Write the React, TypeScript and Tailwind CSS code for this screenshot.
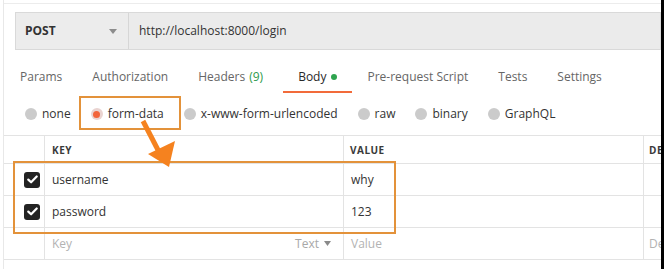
import React from "react";

const Radio = ({ active }: { active?: boolean }) =>
  active ? (
    <span className="w-[12px] h-[12px] rounded-full bg-[#e9d3d0] flex items-center justify-center">
      <span className="w-[7px] h-[7px] rounded-full bg-[#f2643a]" />
    </span>
  ) : (
    <span className="w-[12px] h-[12px] rounded-full bg-[#cbcbcb]" />
  );

const Check = () => (
  <span className="w-[16px] h-[16px] rounded-[3px] bg-[#232323] flex items-center justify-center">
    <svg width="11" height="9" viewBox="0 0 11 9">
      <path d="M1.3 4.6 L4.1 7.3 L9.7 1.5" stroke="white" strokeWidth="2.2" fill="none" strokeLinecap="round" strokeLinejoin="round" />
    </svg>
  </span>
);

export default function App() {
  const tabs = [
    { l: "Params" },
    { l: "Authorization" },
    { l: "Headers", badge: "(9)" },
    { l: "Body", active: true },
    { l: "Pre-request Script" },
    { l: "Tests" },
    { l: "Settings" },
  ];
  const radios = [
    { l: "none" },
    { l: "form-data", active: true },
    { l: "x-www-form-urlencoded" },
    { l: "raw" },
    { l: "binary" },
    { l: "GraphQL" },
  ];
  const rows = [
    { k: "username", v: "why" },
    { k: "password", v: "123" },
  ];
  return (
    <div className="relative w-[664px] h-[269px] bg-white overflow-hidden flex font-['Open_Sans',sans-serif] text-[12px] text-[#333]">
      <div className="w-[3px] shrink-0" />
      <div className="flex-1 border-l border-[#e8e8e8] flex flex-col min-w-0">
        <div className="h-[4px] border-b border-[#ececec] shrink-0" />
        {/* URL bar */}
        <div className="mt-[8px] ml-[11px] h-[38px] flex border border-[#d9d9d9] bg-[#ebebeb] shrink-0">
          <div className="w-[113px] flex items-center justify-between pl-[9px] pr-[11px] border-r border-[#d6d6d6] bg-[#ececec]">
            <span className="font-bold text-[12px] text-[#333]">POST</span>
            <svg width="8" height="5" viewBox="0 0 8 5"><path d="M0 0 L8 0 L4 5 Z" fill="#8c8c8c" /></svg>
          </div>
          <div className="flex items-center pl-[10px] text-[#333]">http://localhost:8000/login</div>
        </div>
        {/* tabs */}
        <div className="mt-[13px] ml-[1px] h-[30px] flex shrink-0">
          {tabs.map((t) => (
            <div
              key={t.l}
              className={
                "px-[15px] flex items-center border-b-[2px] " +
                (t.active ? "border-[#f26b3a] text-[#282828] ml-[5px]" : "border-transparent text-[#666]")
              }
            >
              <span>{t.l}</span>
              {t.badge && <span className="ml-[4px] text-[#2e9b4c]">{t.badge}</span>}
              {t.active && <span className="ml-[5px] w-[6px] h-[6px] rounded-full bg-[#2ea44f]" />}
            </div>
          ))}
        </div>
        {/* radios */}
        <div className="h-[42px] flex items-center pl-[21px] gap-[20px] shrink-0">
          {radios.map((r) => (
            <div key={r.l} className="flex items-center gap-[5px] text-[#333]">
              <Radio active={r.active} />
              <span className="pb-[1px]">{r.l}</span>
            </div>
          ))}
        </div>
        {/* table */}
        <div className="border-t border-[#e3e3e3] shrink-0">
          <div className="h-[28px] flex border-b border-[#e3e3e3] text-[10px] font-bold tracking-[0.5px] text-[#3a3a3a]">
            <div className="w-[41px] border-r border-[#e3e3e3]" />
            <div className="w-[299px] border-r border-[#e3e3e3] pl-[7px] flex items-center pt-[2px]">KEY</div>
            <div className="w-[300px] border-r border-[#e3e3e3] pl-[6px] flex items-center pt-[2px]">VALUE</div>
            <div className="flex-1 pl-[5px] flex items-center pt-[2px] whitespace-nowrap overflow-hidden">DESCRIPTION</div>
          </div>
          {rows.map((r) => (
            <div key={r.k} className="h-[32px] flex border-b border-[#e3e3e3]">
              <div className="w-[41px] border-r border-[#e3e3e3] flex items-center pl-[20px]">
                <Check />
              </div>
              <div className="w-[299px] border-r border-[#e3e3e3] pl-[7px] flex items-center">{r.k}</div>
              <div className="w-[300px] border-r border-[#e3e3e3] pl-[7px] flex items-center">{r.v}</div>
              <div className="flex-1" />
            </div>
          ))}
          <div className="h-[32px] flex border-b border-[#e3e3e3] text-[#b3b3b3]">
            <div className="w-[41px] border-r border-[#e3e3e3]" />
            <div className="w-[299px] border-r border-[#e3e3e3] pl-[7px] pr-[12px] flex items-center justify-between">
              <span>Key</span>
              <span className="flex items-center gap-[5px] text-[#a8a8a8]">
                Text
                <svg width="7" height="5" viewBox="0 0 7 5"><path d="M0 0 L7 0 L3.5 5 Z" fill="#8a8a8a" /></svg>
              </span>
            </div>
            <div className="w-[300px] border-r border-[#e3e3e3] pl-[7px] flex items-center">Value</div>
            <div className="flex-1 pl-[5px] flex items-center whitespace-nowrap overflow-hidden">Description</div>
          </div>
        </div>
      </div>
      <div className="w-[3px] shrink-0 bg-black" />

      {/* annotations */}
      <div className="absolute left-[79px] top-[96px] w-[102px] h-[34px] border-[2px] border-[#e3923a]" />
      <div className="absolute left-[13px] top-[161px] w-[383px] h-[73px] border-[2.5px] border-[#e3923a]" />
      <svg className="absolute left-0 top-0" width="664" height="269" viewBox="0 0 664 269">
        <line x1="143" y1="121" x2="158" y2="150" stroke="#f5821f" strokeWidth="5" />
        <polygon points="148,154 175,141 169,167" fill="#f5821f" />
      </svg>
    </div>
  );
}
